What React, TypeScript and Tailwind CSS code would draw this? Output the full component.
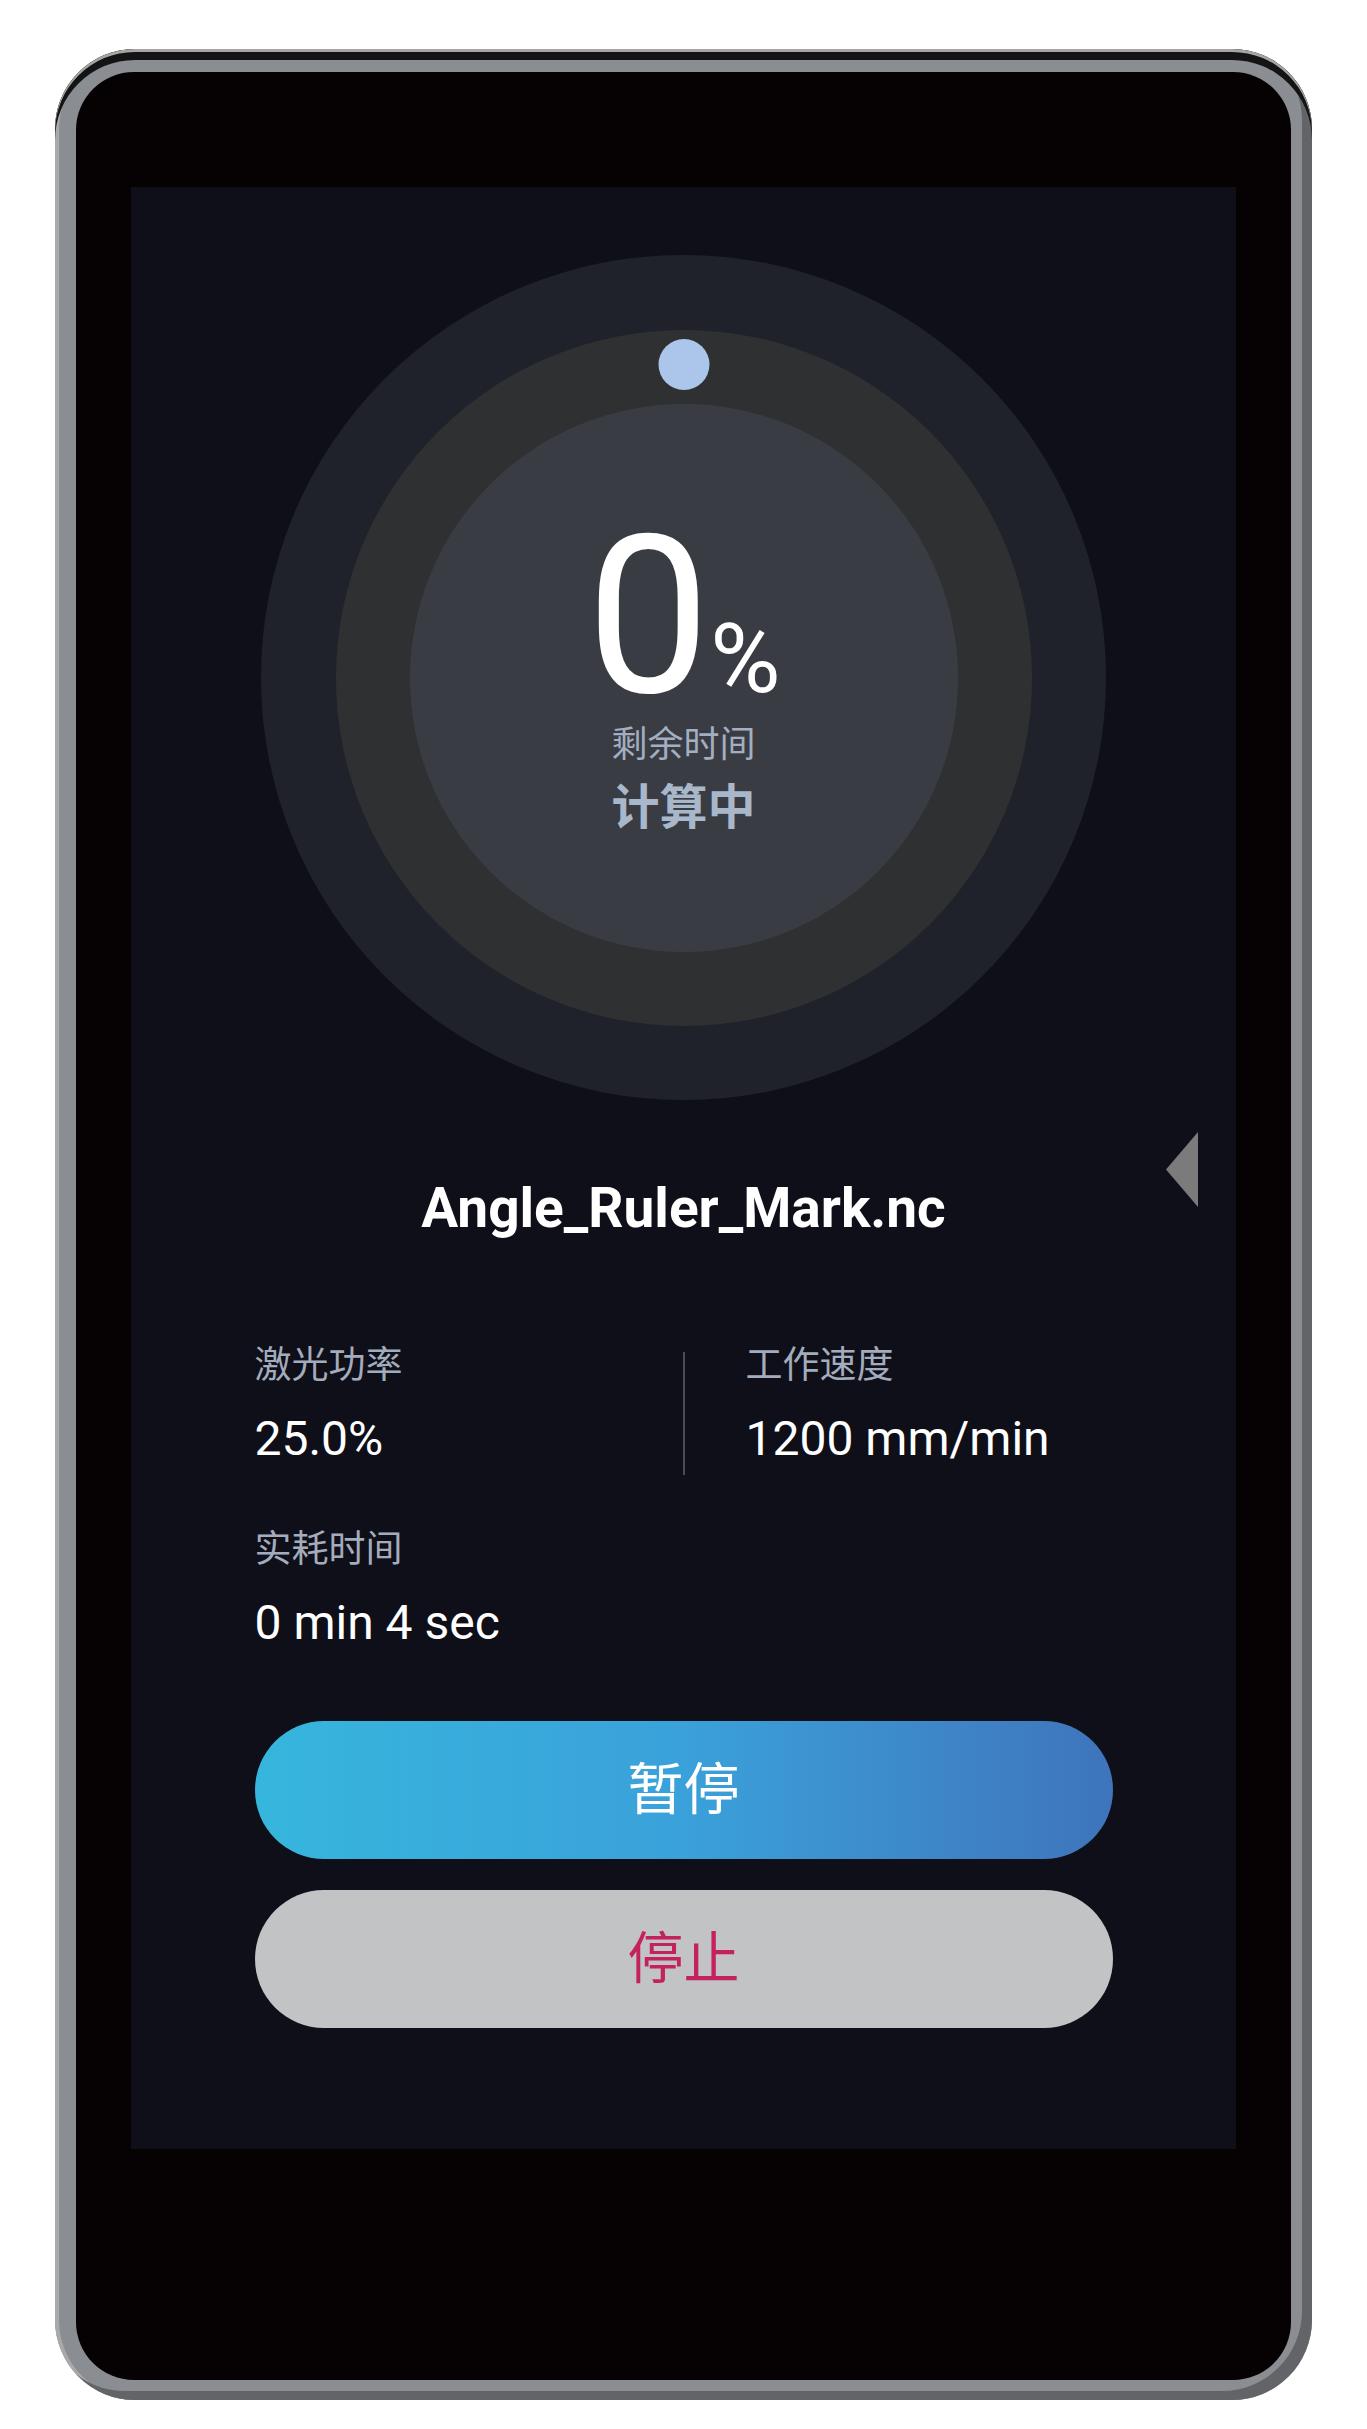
import React from 'react'

const FONT = "font-[Roboto,'Noto_Sans_CJK_SC',sans-serif]"

function ProgressRing() {
  return (
    <div className="mx-auto flex h-[845px] w-[845px] items-center justify-center rounded-full bg-[#20222b]">
      <div className="relative flex h-[696px] w-[696px] items-center justify-center rounded-full bg-[#2f3031]">
        {/* knob at 0% */}
        <div className="absolute left-1/2 top-[9px] h-[51px] w-[51px] -translate-x-1/2 rounded-full bg-[#abc6ea]" />
        <div className="flex h-[548px] w-[548px] flex-col items-center rounded-full bg-[#3a3c44] pt-[120px]">
          <div className="flex items-baseline text-white">
            <span className="text-[220px] leading-[0.85] font-normal">0</span>
            <span className="text-[96px] leading-[0.85] font-normal">%</span>
          </div>
          <p className="mt-[16px] text-[36px] leading-none text-[#a3aec0]">剩余时间</p>
          <p className="mt-[21px] text-[48px] leading-none font-bold text-[#a9b7cb]">计算中</p>
        </div>
      </div>
    </div>
  )
}

function Stat({ label, value }: { label: string; value: string }) {
  return (
    <div>
      <p className="text-[37px] leading-none text-[#a3acbd]">{label}</p>
      <p className="mt-[31px] text-[48px] leading-none text-white">{value}</p>
    </div>
  )
}

export default function App() {
  return (
    <div className={`flex min-h-screen justify-center bg-white pt-[49px] ${FONT}`}>
      {/* ── Device bezel ── */}
      <div className="flex h-[2351px] w-[1257px] rounded-[80px] bg-[#8a8d92] px-[21px] pt-[23px] pb-[20px] shadow-[inset_0_3px_0_#a6a6a6,inset_0_11px_0_#141414,inset_-10px_-9px_0_#626467,inset_4px_0_0_#a9a9a9]">
        <div className="flex-1 rounded-[58px] bg-[#060203] px-[55px] pt-[115px]">
          {/* ── Screen ── */}
          <div className="relative h-[1962px] w-full bg-[#0f0f19] pt-[68px]">
            <ProgressRing />

            <h1 className="mt-[81px] text-center text-[55px] leading-none font-bold text-white">
              Angle_Ruler_Mark.nc
            </h1>

            <div className="mx-auto mt-[111px] w-[858px]">
              <div className="flex">
                <div className="w-[428px]">
                  <Stat label="激光功率" value="25.0%" />
                </div>
                <div className="mt-[5px] h-[123px] w-[2px] bg-[#4a4c55]" />
                <div className="pl-[61px]">
                  <Stat label="工作速度" value="1200 mm/min" />
                </div>
              </div>
              <div className="mt-[56px]">
                <Stat label="实耗时间" value="0 min 4 sec" />
              </div>

              <button
                type="button"
                className="mt-[74px] flex h-[138px] w-full items-center justify-center rounded-full bg-linear-to-r from-[#36b6dd] via-[#3aa1da] to-[#3e74bb] text-[56px] leading-none text-white"
              >
                暂停
              </button>
              <button
                type="button"
                className="mt-[31px] flex h-[138px] w-full items-center justify-center rounded-full bg-[#c2c3c5] text-[56px] leading-none text-[#c4225f]"
              >
                停止
              </button>
            </div>

            {/* side drawer handle */}
            <svg className="absolute right-[38px] top-[945px]" width="32" height="75" viewBox="0 0 32 75">
              <polygon points="32,0 0,37.5 32,75" fill="#7b7b7b" />
            </svg>
          </div>
        </div>
      </div>
    </div>
  )
}
